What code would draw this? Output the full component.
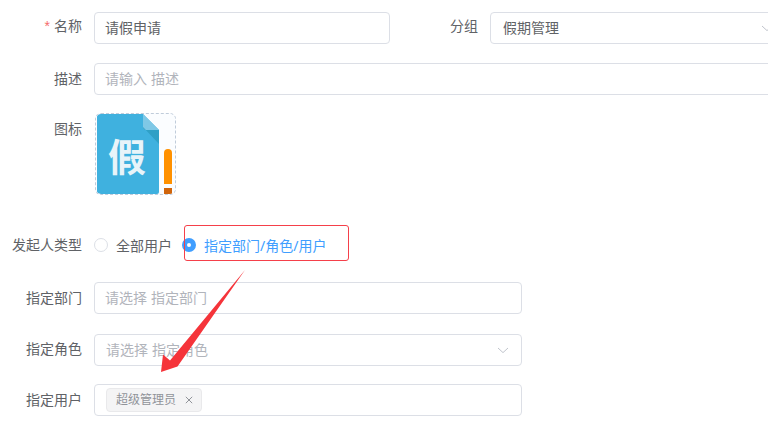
<script>
  let startType = 'custom';
</script>

<div class="page">
  <form class="form">
    <div class="row first">
      <div class="field name">
        <span class="label"><i>*</i>名称</span>
        <div class="input text">请假申请</div>
      </div>
      <div class="field group">
        <span class="label">分组</span>
        <div class="input text grow">
          假期管理
          <svg class="arrow" width="12" height="12" viewBox="0 0 12 12"><path d="M1 4l5 4.6L11 4" fill="none" stroke="#c0c4cc" stroke-width="1" /></svg>
        </div>
      </div>
    </div>

    <div class="field desc">
      <span class="label">描述</span>
      <div class="input holder wide">请输入 描述</div>
    </div>

    <div class="field icon-row">
      <span class="label">图标</span>
      <div class="uploader">
        <svg width="78" height="80" viewBox="0 0 78 80">
          <path d="M3 0H46L62 16V78a2 2 0 0 1-2 2H3a3 3 0 0 1-3-3V3a3 3 0 0 1 3-3z" fill="#3fb1df" />
          <path d="M46 0L62 16H49a3 3 0 0 1-3-3z" fill="#7fc8e6" />
          <path d="M46 13a3 3 0 0 0 3 3H62V30z" fill="#2fa0c6" />
          <text x="30" y="57" text-anchor="middle" class="glyph">假</text>
          <path d="M67 39a4 4 0 0 1 8 0V70H67z" fill="#ff9100" />
          <rect x="67" y="74" width="8" height="6" fill="#d0650c" />
        </svg>
      </div>
    </div>

    <div class="field radios">
      <span class="label">发起人类型</span>
      <label class="radio"><span class="dot"></span>全部用户</label>
      <label class="radio on"><span class="dot"></span>指定部门/角色/用户</label>
    </div>

    <div class="field dept">
      <span class="label">指定部门</span>
      <div class="input holder medium">请选择 指定部门</div>
    </div>

    <div class="field role">
      <span class="label">指定角色</span>
      <div class="input holder medium pad">
        请选择 指定角色
        <svg class="arrow" width="12" height="12" viewBox="0 0 12 12"><path d="M1 4l5 4.6L11 4" fill="none" stroke="#c0c4cc" stroke-width="1" /></svg>
      </div>
    </div>

    <div class="field user">
      <span class="label">指定用户</span>
      <div class="input medium pad">
        <span class="tag">超级管理员<svg width="8" height="8" viewBox="0 0 8 8"><path d="M.8.8l6.400 6.400M7.200.8L.8 7.200" fill="none" stroke="#909399" stroke-width="1" /></svg></span>
      </div>
    </div>
  </form>

  <div class="mark"></div>
  <svg class="pointer" width="768" height="432" viewBox="0 0 768 432">
    <path d="M245 270L177.500 366.500L161 372L163 354.500L170 360.500z" fill="#f5343a" />
  </svg>
</div>

<style>
  :global(body) {
    margin: 0;
    background: #fff;
  }

  .page {
    position: relative;
    width: 768px;
    height: 432px;
    overflow: hidden;
    font-family: "Liberation Sans", "Noto Sans CJK SC", sans-serif;
    font-size: 14px;
    color: #606266;
  }

  .form {
    display: flex;
    flex-direction: column;
    padding-top: 12px;
    width: 900px;
  }

  .first {
    display: flex;
  }

  .field {
    display: flex;
    align-items: flex-start;
  }

  .label {
    width: 82px;
    margin-right: 12px;
    flex: none;
    text-align: right;
    line-height: 32px;
    color: #606266;
    white-space: nowrap;
  }

  .label i {
    font-style: normal;
    color: #f56c6c;
    margin-right: 4px;
  }

  .name {
    width: 390px;
  }

  .name .label,
  .group .label {
    line-height: 28px;
  }

  .group .label {
    width: 88px;
  }

  .input {
    position: relative;
    box-sizing: border-box;
    height: 32px;
    border: 1px solid #dcdfe6;
    border-radius: 4px;
    line-height: 30px;
    padding: 0 10px;
    background: #fff;
    width: 296px;
    white-space: nowrap;
  }

  .grow {
    width: 400px;
    padding-left: 12px;
  }

  .wide {
    width: 800px;
  }

  .medium {
    width: 428px;
  }

  .pad {
    padding-left: 11px;
  }

  .holder {
    color: #b1b4bb;
  }

  .arrow {
    position: absolute;
    top: 9px;
    left: 402px;
  }

  .group .arrow {
    left: 270px;
  }

  .desc {
    margin-top: 19px;
  }

  .icon-row {
    margin-top: 18px;
  }

  .uploader {
    box-sizing: border-box;
    width: 81px;
    height: 82px;
    margin-left: 1px;
    border: 1px dashed #c0ccda;
    border-radius: 6px;
    background: #fbfdff;
    overflow: hidden;
  }

  .uploader svg {
    display: block;
    margin-left: 1px;
  }

  .glyph {
    font-size: 38px;
    font-weight: 700;
    fill: #e8f4f9;
    font-family: "Noto Sans CJK SC", sans-serif;
  }

  .radios {
    margin-top: 30px;
    height: 40px;
    align-items: center;
  }

  .radios .label {
    line-height: 20px;
  }

  .radio {
    display: flex;
    align-items: center;
    color: #606266;
    margin-right: 10px;
  }

  .dot {
    box-sizing: border-box;
    width: 14px;
    height: 14px;
    margin-right: 8px;
    border: 1px solid #dcdfe6;
    border-radius: 50%;
    background: #fff;
  }

  .on {
    color: #409eff;
    font-family: "Noto Sans", "Noto Sans CJK SC", sans-serif;
  }

  .on .dot {
    border: 5px solid #409eff;
  }

  .dept {
    margin-top: 17px;
  }

  .role {
    margin-top: 20px;
  }

  .role .label {
    line-height: 30px;
  }

  .user {
    margin-top: 18px;
  }

  .tag {
    display: inline-flex;
    align-items: center;
    box-sizing: border-box;
    height: 24px;
    padding: 0 8px 0 9px;
    margin-top: 3px;
    vertical-align: top;
    background: #f4f4f5;
    border: 1px solid #e9e9eb;
    border-radius: 4px;
    font-size: 12px;
    color: #909399;
  }

  .tag svg {
    margin-left: 9px;
  }

  .mark {
    position: absolute;
    left: 184px;
    top: 225px;
    box-sizing: border-box;
    width: 165px;
    height: 36px;
    border: 1.500px solid #f5404a;
    border-radius: 3px;
  }

  .pointer {
    position: absolute;
    left: 0;
    top: 0;
    pointer-events: none;
  }
</style>
